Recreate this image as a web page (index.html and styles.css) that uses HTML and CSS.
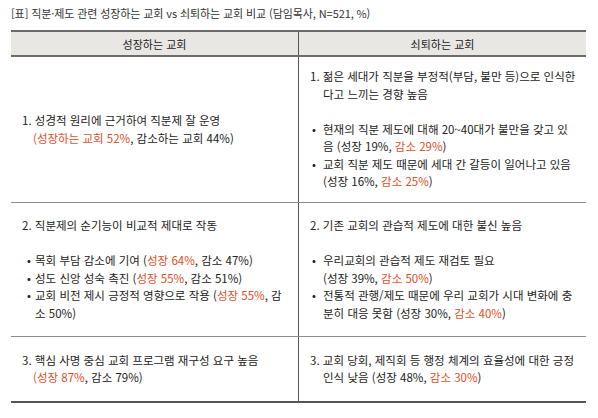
FILE: index.html
```html
<!DOCTYPE html>
<html lang="ko">
<head>
<meta charset="utf-8">
<link rel="stylesheet" href="styles.css">
</head>
<body>
<p class="caption">[표] 직분·제도 관련 성장하는 교회 vs 쇠퇴하는 교회 비교 (담임목사, N=521, %)</p>
<table class="cmp">
  <thead>
    <tr><th>성장하는 교회</th><th class="right">쇠퇴하는 교회</th></tr>
  </thead>
  <tbody>
    <tr class="r1">
      <td>
        <p class="item left-item">1. 성경적 원리에 근거하여 직분제 잘 운영<br><span class="hl">(성장하는 교회 52%</span>, 감소하는 교회 44%)</p>
      </td>
      <td class="right">
        <p class="item">1. 젊은 세대가 직분을 부정적(부담, 불만 등)으로 인식한<br>다고 느끼는 경향 높음</p>
        <ul class="bullets">
          <li><span class="dot">•</span><span>현재의 직분 제도에 대해 20~40대가 불만을 갖고 있<br>음 (성장 19%, <span class="hl">감소 29%</span>)</span></li>
          <li><span class="dot">•</span><span>교회 직분 제도 때문에 세대 간 갈등이 일어나고 있음<br>(성장 16%, <span class="hl">감소 25%</span>)</span></li>
        </ul>
      </td>
    </tr>
    <tr class="r2">
      <td>
        <p class="item left-item">2. 직분제의 순기능이 비교적 제대로 작동</p>
        <ul class="bullets left-bullets">
          <li><span class="dot">•</span><span>목회 부담 감소에 기여 (<span class="hl">성장 64%</span>, 감소 47%)</span></li>
          <li><span class="dot">•</span><span>성도 신앙 성숙 촉진 (<span class="hl">성장 55%</span>, 감소 51%)</span></li>
          <li><span class="dot">•</span><span>교회 비전 제시 긍정적 영향으로 작용 (<span class="hl">성장 55%</span>, 감<br>소 50%)</span></li>
        </ul>
      </td>
      <td class="right">
        <p class="item">2. 기존 교회의 관습적 제도에 대한 불신 높음</p>
        <ul class="bullets">
          <li><span class="dot">•</span><span>우리교회의 관습적 제도 재검토 필요<br>(성장 39%, <span class="hl">감소 50%</span>)</span></li>
          <li><span class="dot">•</span><span>전통적 관행/제도 때문에 우리 교회가 시대 변화에 충<br>분히 대응 못함 (성장 30%, <span class="hl">감소 40%</span>)</span></li>
        </ul>
      </td>
    </tr>
    <tr class="r3">
      <td>
        <p class="item left-item">3. 핵심 사명 중심 교회 프로그램 재구성 요구 높음<br><span class="hl">(성장 87%</span>, 감소 79%)</p>
      </td>
      <td class="right">
        <p class="item">3. 교회 당회, 제직회 등 행정 체계의 효율성에 대한 긍정<br>인식 낮음 (성장 48%, <span class="hl">감소 30%</span>)</p>
      </td>
    </tr>
  </tbody>
</table>
</body>
</html>
```

FILE: styles.css
```css
html, body {
  margin: 0;
  padding: 0;
  background: #ffffff;
}
body {
  padding: 5px 12px 0 11px;
  font-family: "Noto Sans CJK KR", "Noto Sans", sans-serif;
  color: #222222;
  font-size: 11.5px;
}
.caption {
  margin: 0 0 9px 0;
  font-size: 11px;
  line-height: 16px;
  color: #333333;
  letter-spacing: -0.1px;
}
.cmp {
  width: 575px;
  border-collapse: collapse;
  table-layout: fixed;
}
.cmp th {
  height: 23px;
  padding: 0;
  background: #e8e7e4;
  border-top: 2px solid #6b6b6b;
  border-bottom: 2px solid #6b6b6b;
  font-weight: normal;
  font-size: 11px;
  color: #222222;
  text-align: center;
  vertical-align: middle;
}
.cmp th.right, .cmp td.right {
  border-left: 1px solid #555555;
}
.cmp td {
  padding: 0 2px 0 11px;
  vertical-align: middle;
  border-bottom: 1px solid #8c8c8c;
  line-height: 17.5px;
}
.cmp tr.r1 td { height: 145px; }
.cmp tr.r2 td { height: 133px; }
.cmp tr.r3 td { height: 64px; border-bottom: 2px solid #555555; }
.item {
  margin: 0;
  padding-left: 13px;
  text-indent: -13px;
}
.left-item {
  padding-left: 11px;
  text-indent: -11px;
}
.bullets {
  list-style: none;
  margin: 17.5px 0 0 0;
  padding: 0;
}
.bullets li {
  display: flex;
}
.dot {
  flex: none;
  width: 13px;
  padding-left: 2px;
  box-sizing: border-box;
}
.left-bullets li {
  padding-left: 4px;
}
.left-bullets .dot {
  width: 9px;
  padding-left: 1px;
}
.hl {
  color: #dc4f27;
}
```
